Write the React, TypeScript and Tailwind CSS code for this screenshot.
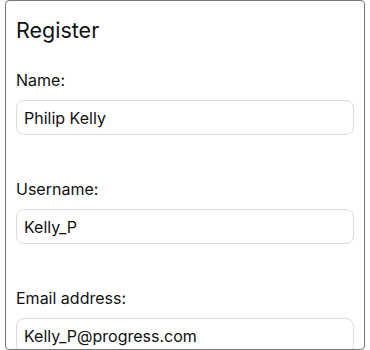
import React from "react";

function Field({ label, value }: { label: string; value: string }) {
  return (
    <div className="mb-[42px]">
      <label className="block text-[16px] leading-[24px] mb-[8px] text-[#111]">{label}</label>
      <input
        readOnly
        value={value}
        className="block w-full h-[35px] rounded-[8px] border border-[#dcdcdc] bg-white px-[7px] text-[16px] text-[#111] outline-none"
        style={{ fontFamily: "Inter, 'Liberation Sans', sans-serif" }}
      />
    </div>
  );
}

export default function App() {
  return (
    <div className="bg-white w-[370px] h-[350px]" style={{ fontFamily: "Inter, 'Liberation Sans', sans-serif" }}>
      <div className="mx-auto w-[360px] h-[350px] border border-[#777] rounded-[4px] overflow-hidden px-[10px] pt-[13px]">
        <h1 className="text-[21.5px] leading-[32px] text-[#111] mb-[22px]">Register</h1>
        <Field label="Name:" value="Philip Kelly" />
        <Field label="Username:" value="Kelly_P" />
        <Field label="Email address:" value="Kelly_P@progress.com" />
      </div>
    </div>
  );
}
